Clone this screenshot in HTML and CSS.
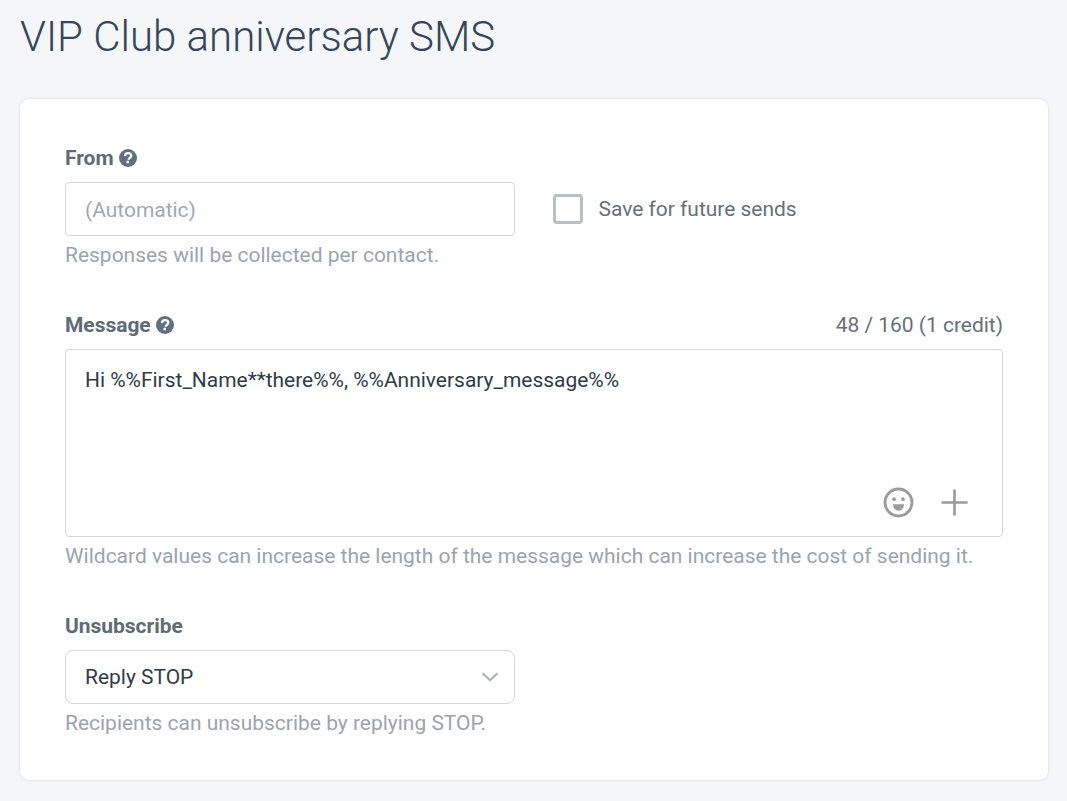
FILE: index.html
```html
<!DOCTYPE html>
<html lang="en">
<head>
<meta charset="utf-8">
<title>VIP Club anniversary SMS</title>
<link rel="stylesheet" href="styles.css">
</head>
<body>
<h1 class="title">VIP Club anniversary SMS</h1>
<main class="card">
  <section class="field field-from">
    <label class="label">From
      <svg class="help" viewBox="0 0 18 18" aria-hidden="true"><circle cx="9" cy="9" r="9" fill="#5f7080"/><path d="M5.900 7.100c.1-1.800 1.500-2.900 3.200-2.900 1.800 0 3.100 1.100 3.100 2.600 0 1.100-.6 1.700-1.500 2.300-.8.500-1 .8-1 1.600" fill="none" stroke="#fff" stroke-width="2.300"/><rect x="7.500" y="11.800" width="2.400" height="2.400" rx=".3" fill="#fff"/></svg>
    </label>
    <div class="from-row">
      <div class="input placeholder">(Automatic)</div>
      <div class="save"><span class="checkbox"></span><span class="save-text">Save for future sends</span></div>
    </div>
    <p class="hint">Responses will be collected per contact.</p>
  </section>
  <section class="field field-message">
    <div class="label-row">
      <label class="label">Message
        <svg class="help" viewBox="0 0 18 18" aria-hidden="true"><circle cx="9" cy="9" r="9" fill="#5f7080"/><path d="M5.900 7.100c.1-1.800 1.500-2.900 3.200-2.900 1.800 0 3.100 1.100 3.100 2.600 0 1.100-.6 1.700-1.500 2.300-.8.500-1 .8-1 1.600" fill="none" stroke="#fff" stroke-width="2.300"/><rect x="7.500" y="11.800" width="2.400" height="2.400" rx=".3" fill="#fff"/></svg>
      </label>
      <span class="counter">48 / 160 (1 credit)</span>
    </div>
    <div class="textarea">
      <div class="message-text">Hi %%First_Name**there%%, %%Anniversary_message%%</div>
      <div class="tools">
        <svg class="tool" viewBox="0 0 32 32" aria-hidden="true"><circle cx="16" cy="16" r="13.900" fill="none" stroke="#9b9b9b" stroke-width="3"/><circle cx="11.400" cy="12.600" r="1.900" fill="#9b9b9b"/><circle cx="20.600" cy="12.600" r="1.900" fill="#9b9b9b"/><path d="M10.300 17.800h11.400c0 3.800-2.300 6.600-5.700 6.600s-5.700-2.800-5.700-6.600z" fill="#9b9b9b"/></svg>
        <svg class="tool" viewBox="0 0 32 32" aria-hidden="true"><path d="M16 2.500v27M2.500 16h27" fill="none" stroke="#9b9b9b" stroke-width="2.700"/></svg>
      </div>
    </div>
    <p class="hint">Wildcard values can increase the length of the message which can increase the cost of sending it.</p>
  </section>
  <section class="field field-unsub">
    <label class="label">Unsubscribe</label>
    <div class="input select">
      <span>Reply STOP</span>
      <svg class="chevron" viewBox="0 0 18 10" aria-hidden="true"><path d="M1.500 1.200 9 8.200l7.500-7" fill="none" stroke="#a9b2b9" stroke-width="2.200"/></svg>
    </div>
    <p class="hint">Recipients can unsubscribe by replying STOP.</p>
  </section>
</main>
</body>
</html>
```

FILE: styles.css
```css
* { box-sizing: border-box; }
html, body { height: 100%; }
body {
  margin: 0;
  height: 801px;
  overflow: hidden;
  background: #f5f6f8;
  font-family: Roboto, "Liberation Sans", sans-serif;
  font-size: 20.96px;
  color: #2f3b47;
}
.title {
  margin: 0;
  padding: 11px 0 0 20px;
  height: 99px;
  font-size: 42px;
  line-height: 52px;
  font-weight: 300;
  color: #34465a;
}
.card {
  margin: 0 19px 0 20px;
  height: 681px;
  padding: 45px 45px 0;
  background: #fff;
  border-radius: 9px;
  box-shadow: 0 0 3px rgba(50, 60, 80, 0.18);
}
.field { display: flex; flex-direction: column; }
.label {
  display: flex;
  align-items: center;
  gap: 5px;
  font-size: 20.96px;
  line-height: 28px;
  font-weight: 700;
  color: #5f6b75;
}
.help { width: 18px; height: 18px; }
.from-row { display: flex; align-items: center; margin-top: 10px; }
.input {
  width: 450px;
  height: 54px;
  padding: 0 19px;
  display: flex;
  align-items: center;
  background: #fff;
  border: 1px solid #d4d6da;
  border-radius: 4px;
  font-size: 20.96px;
}
.placeholder { color: #a2a8b2; padding-top: 2px; }
.save { display: flex; align-items: center; margin-left: 38px; }
.checkbox {
  width: 30px;
  height: 30px;
  border: 3px solid #b7bfc6;
  border-radius: 4px;
}
.save-text { margin-left: 15.5px; color: #66707a; font-size: 20.96px; }
.hint { margin: 5px 0 0; font-size: 20.98px; line-height: 28px; color: #9da3ad; }
.field-message { margin-top: 42px; }
.label-row { display: flex; justify-content: space-between; align-items: center; }
.counter { color: #66707a; font-size: 20.96px; }
.textarea {
  margin-top: 10px;
  height: 188px;
  padding: 16px 19px 0;
  display: flex;
  flex-direction: column;
  justify-content: space-between;
  border: 1px solid #d4d6da;
  border-radius: 4px;
}
.message-text { line-height: 28px; color: #2f3b47; }
.tools { display: flex; justify-content: flex-end; gap: 25px; padding: 0 13px 18px 0; }
.tool { width: 31px; height: 31px; }
.field-unsub { margin-top: 42px; }
.select { justify-content: space-between; margin-top: 10px; border-radius: 8px; padding-right: 15px; }
.chevron { width: 18px; height: 10px; }
```
